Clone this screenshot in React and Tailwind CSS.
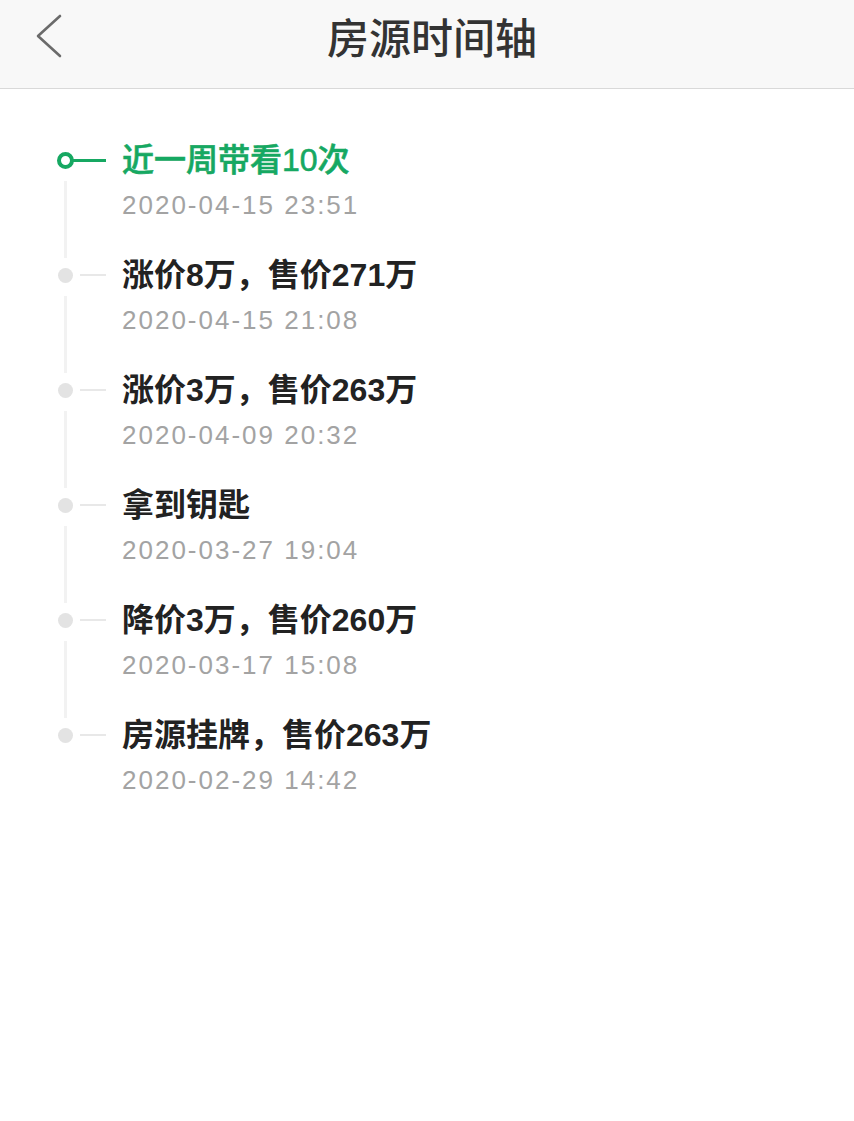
import React from "react";

const items = [
  { title: "近一周带看10次", date: "2020-04-15 23:51", active: true },
  { title: "涨价8万，售价271万", date: "2020-04-15 21:08" },
  { title: "涨价3万，售价263万", date: "2020-04-09 20:32" },
  { title: "拿到钥匙", date: "2020-03-27 19:04" },
  { title: "降价3万，售价260万", date: "2020-03-17 15:08" },
  { title: "房源挂牌，售价263万", date: "2020-02-29 14:42" },
];

const Header = () => {
  return (
    <div className="h-[89px] bg-[#f8f8f8] border-b border-[#d9d9d9] grid grid-cols-[1fr_auto_1fr] items-start pt-[14px]">
      <div className="h-[44px] flex items-center pl-[35px]">
        <svg width="28" height="44" viewBox="0 0 28 44" fill="none">
          <polyline
            points="25,2 3,22 25,42"
            stroke="#6b6b6b"
            strokeWidth="2.6"
            strokeLinecap="round"
            strokeLinejoin="round"
          />
        </svg>
      </div>
      <h1 className="h-[44px] leading-[44px] text-[42px] font-medium text-[#333] pl-[10px] font-['Noto_Sans_CJK_SC',sans-serif]">
        房源时间轴
      </h1>
      <div />
    </div>
  );
};

const TimelineItem = ({ title, date, active, last }) => {
  return (
    <div className="flex">
      <div className="w-[16px] shrink-0 flex flex-col items-center">
        <div className="h-[46px] flex items-center">
          {active ? (
            <div className="w-[17px] h-[17px] shrink-0 rounded-full border-[4.5px] border-[#16a862]" />
          ) : (
            <div className="w-[15px] h-[15px] shrink-0 rounded-full bg-[#e3e3e3]" />
          )}
        </div>
        {!last && (
          <div className="w-[3px] h-[77px] -mt-[2px] -mb-[6px] bg-[#f2f2f2]" />
        )}
      </div>
      <div className="flex-1">
        <div className="h-[46px] flex items-center">
          {active ? (
            <div className="w-[34px] h-[3px] -ml-[1px] bg-[#16a862]" />
          ) : (
            <div className="ml-[7px] w-[26px] h-[2px] bg-[#e8e8e8]" />
          )}
          <span
            className={`ml-[16px] text-[32px] leading-[46px] font-['Liberation_Sans','Noto_Sans_CJK_SC',sans-serif] ${
              active
                ? "text-[#16a862] font-medium [-webkit-text-stroke:0.6px_#16a862]"
                : "text-[#222] font-bold"
            }`}
          >
            {title}
          </span>
        </div>
        <div className="h-[44px] flex items-center pl-[49px] text-[26px] tracking-[2px] text-[#a3a3a3] font-['Liberation_Sans',sans-serif]">
          {date}
        </div>
      </div>
    </div>
  );
};

export default function App() {
  return (
    <div className="w-[854px] min-h-[1121px] bg-white">
      <Header />
      <div className="pl-[57px] pt-[48px]">
        {items.map((item, i) => (
          <TimelineItem key={i} {...item} last={i === items.length - 1} />
        ))}
      </div>
    </div>
  );
}
